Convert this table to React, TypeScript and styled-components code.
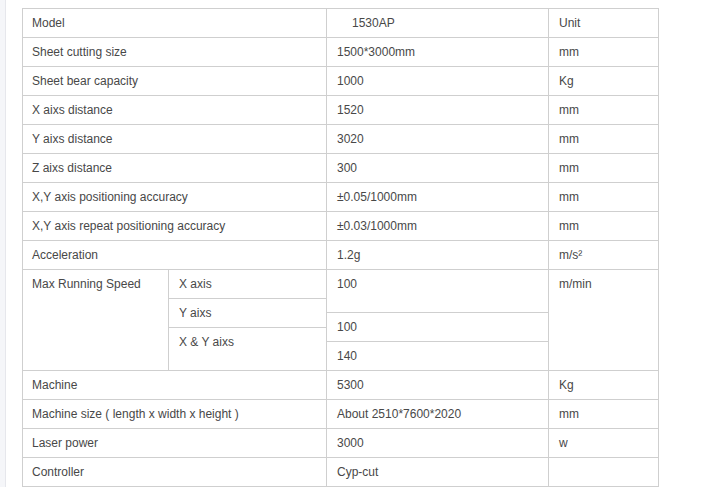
import React from "react";
import styled, { createGlobalStyle } from "styled-components";

const Global = createGlobalStyle`
  html, body { margin: 0; padding: 0; background: #ffffff; }
  body { font-family: "Liberation Sans", Arial, sans-serif; }
`;

const Page = styled.div`
  display: flex;
  min-height: 487px;
`;

const Strip = styled.div`
  width: 5px;
  flex: none;
  background: #f5f6f9;
  border-right: 1px solid #e6e7ec;
`;

const Content = styled.div`
  padding: 8px 0 0 16px;
`;

const Grid = styled.div`
  display: grid;
  grid-template-columns: 146px 158px 222px 110px;
  grid-template-rows:
    repeat(9, 29px)
    29px 14px 15px 14px 29px
    repeat(4, 29px);
  border-top: 1px solid #cfcfcf;
  border-left: 1px solid #cfcfcf;
  width: max-content;
`;

const Cell = styled.div<{ $col: string; $row: string; $indent?: number; $first?: boolean }>`
  grid-column: ${(p) => p.$col};
  grid-row: ${(p) => p.$row};
  box-sizing: border-box;
  border-right: 1px solid #cfcfcf;
  border-bottom: 1px solid #cfcfcf;
  padding: 6px 6px 0 ${(p) => (p.$indent ?? (p.$first ? 9 : 10))}px;
  font-size: 12px;
  line-height: 16px;
  color: #484848;
  white-space: pre;
  overflow: hidden;
`;

type Row = { label: string; value: string; unit: string; valueIndent?: number };

const topRows: Row[] = [
  { label: "Model", value: "1530AP", unit: "Unit", valueIndent: 25 },
  { label: "Sheet cutting size", value: "1500*3000mm", unit: "mm" },
  { label: "Sheet bear capacity", value: "1000", unit: "Kg" },
  { label: "X aixs distance", value: "1520", unit: "mm" },
  { label: "Y aixs distance", value: "3020", unit: "mm" },
  { label: "Z aixs distance", value: "300", unit: "mm" },
  { label: "X,Y axis positioning accuracy", value: "±0.05/1000mm", unit: "mm" },
  { label: "X,Y axis repeat positioning accuracy", value: "±0.03/1000mm", unit: "mm" },
  { label: "Acceleration", value: "1.2g", unit: "m/s²" },
];

const bottomRows: Row[] = [
  { label: "Machine", value: "5300", unit: "Kg" },
  { label: "Machine size ( length x width x height )", value: "About 2510*7600*2020", unit: "mm" },
  { label: "Laser power", value: "3000", unit: "w" },
  { label: "Controller", value: "Cyp-cut", unit: "" },
];

function renderRows(rows: Row[], startLine: number) {
  return rows.map((r, i) => {
    const line = `${startLine + i}`;
    return (
      <React.Fragment key={r.label}>
        <Cell $col="1 / 3" $row={line} $first>
          {r.label}
        </Cell>
        <Cell $col="3" $row={line} $indent={r.valueIndent}>
          {r.value}
        </Cell>
        <Cell $col="4" $row={line}>
          {r.unit}
        </Cell>
      </React.Fragment>
    );
  });
}

export default function App() {
  return (
    <>
      <Global />
      <Page>
        <Strip />
        <Content>
          <Grid>
            {renderRows(topRows, 1)}
            <Cell $col="1" $row="10 / 15" $first>
              Max Running Speed
            </Cell>
            <Cell $col="2" $row="10 / 11">X axis</Cell>
            <Cell $col="2" $row="11 / 13">Y aixs</Cell>
            <Cell $col="2" $row="13 / 15">X &amp; Y aixs</Cell>
            <Cell $col="3" $row="10 / 12">100</Cell>
            <Cell $col="3" $row="12 / 14">100</Cell>
            <Cell $col="3" $row="14 / 15">140</Cell>
            <Cell $col="4" $row="10 / 15">m/min</Cell>
            {renderRows(bottomRows, 15)}
          </Grid>
        </Content>
      </Page>
    </>
  );
}
